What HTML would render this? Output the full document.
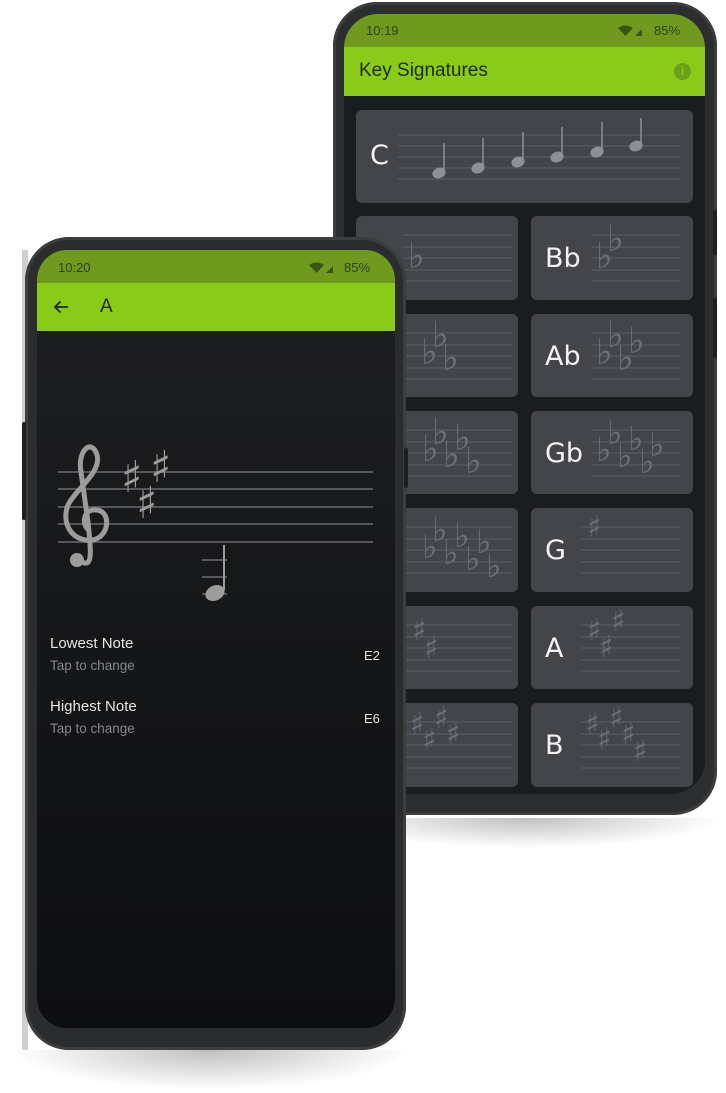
<!DOCTYPE html>
<html><head><meta charset="utf-8"><style>
*{margin:0;padding:0;box-sizing:border-box}
body{width:726px;height:1093px;background:#fff;position:relative;overflow:hidden;font-family:"Liberation Sans","DejaVu Sans",sans-serif}
.abs{position:absolute}
.card{position:absolute;background:#43454b;border-radius:6px;overflow:hidden}
.card .lbl{position:absolute;left:14px;color:#f2f2f2;font-size:27px;font-family:"DejaVu Sans","Liberation Sans",sans-serif}
.card svg{position:absolute;left:0;top:0}
.acc{font-family:"DejaVu Sans",sans-serif;fill:#6c6f76}
.fl{font-size:36px}
.sh{font-size:30px}
</style></head><body>

<!-- BACK PHONE -->
<div class="abs" style="left:326px;top:818px;width:400px;height:30px;background:radial-gradient(ellipse at 50% 0,rgba(0,0,0,.25),rgba(0,0,0,0) 70%)"></div>
<div class="abs" style="left:333px;top:2px;width:384px;height:813px;border-radius:44px;background:#2b2d2f;box-shadow:inset 0 0 0 3px #3a3c3e"></div>
<div class="abs" style="left:713px;top:210px;width:4px;height:45px;background:#1d1f20;border-radius:2px"></div>
<div class="abs" style="left:713px;top:298px;width:4px;height:60px;background:#1d1f20;border-radius:2px"></div>
<div class="abs" style="left:344px;top:14px;width:361px;height:780px;border-radius:34px;overflow:hidden;background:#1b1c1e">
  <div class="abs" style="left:0;top:0;width:361px;height:33px;background:#6f9a1e;color:#2e4210;font-size:13px">
    <span class="abs" style="left:22px;top:9px">10:19</span>
    <svg class="abs" style="left:274px;top:11px" width="30" height="12"><path d="M0 3 Q7.5 -2 15 3 L7.5 11 Z" fill="#3a5414"/><path d="M17 11 L24 4 L24 11 Z" fill="#3a5414"/></svg>
    <span class="abs" style="left:310px;top:9px">85%</span>
  </div>
  <div class="abs" style="left:0;top:33px;width:361px;height:49px;background:#8acb1a">
    <span class="abs" style="left:15px;top:13px;font-size:19px;color:#1d2a0a">Key Signatures</span>
    <div class="abs" style="left:330px;top:16px;width:17px;height:17px;border-radius:50%;background:#6ba11a;color:#8acb1a;font-size:12px;text-align:center;line-height:17px;font-weight:bold">i</div>
  </div>
</div>

<!-- Cards -->
<div class="card" style="left:356px;top:110px;width:337px;height:93px">
  <span class="lbl" style="top:30px">C</span>
  <svg width="337" height="93"><g stroke="#5d6067" stroke-width="1"><line x1="42" y1="25" x2="324" y2="25"/><line x1="42" y1="36" x2="324" y2="36"/><line x1="42" y1="47" x2="324" y2="47"/><line x1="42" y1="58" x2="324" y2="58"/><line x1="42" y1="69" x2="324" y2="69"/></g>
  <g fill="#8e9096" stroke="#8e9096" stroke-width="1.5">
  <ellipse cx="83" cy="63" rx="6" ry="4.5" transform="rotate(-20 83 63)"/><line x1="88" y1="62" x2="88" y2="33"/>
  <ellipse cx="122" cy="58" rx="6" ry="4.5" transform="rotate(-20 122 58)"/><line x1="127" y1="57" x2="127" y2="28"/>
  <ellipse cx="162" cy="52" rx="6" ry="4.5" transform="rotate(-20 162 52)"/><line x1="167" y1="51" x2="167" y2="22"/>
  <ellipse cx="201" cy="47" rx="6" ry="4.5" transform="rotate(-20 201 47)"/><line x1="206" y1="46" x2="206" y2="17"/>
  <ellipse cx="241" cy="42" rx="6" ry="4.5" transform="rotate(-20 241 42)"/><line x1="246" y1="41" x2="246" y2="12"/>
  <ellipse cx="280" cy="36" rx="6" ry="4.5" transform="rotate(-20 280 36)"/><line x1="285" y1="35" x2="285" y2="8"/>
  </g></svg>
</div>

<!-- left column cards -->
<div class="card" style="left:356px;top:216px;width:162px;height:84px"><svg width="162" height="84"><g stroke="#5d6067"><line x1="47" y1="19" x2="156" y2="19"/><line x1="47" y1="31" x2="156" y2="31"/><line x1="47" y1="42" x2="156" y2="42"/><line x1="47" y1="54" x2="156" y2="54"/><line x1="47" y1="65" x2="156" y2="65"/></g><text class="acc fl" x="52" y="52">♭</text></svg></div>
<div class="card" style="left:356px;top:314px;width:162px;height:83px"><svg width="162" height="83"><g stroke="#5d6067"><line x1="47" y1="19" x2="156" y2="19"/><line x1="47" y1="31" x2="156" y2="31"/><line x1="47" y1="42" x2="156" y2="42"/><line x1="47" y1="54" x2="156" y2="54"/><line x1="47" y1="65" x2="156" y2="65"/></g><text class="acc fl"><tspan x="65" y="50">♭</tspan><tspan x="76" y="33">♭</tspan><tspan x="86" y="56">♭</tspan></text></svg></div>
<div class="card" style="left:356px;top:411px;width:162px;height:83px"><svg width="162" height="83"><g stroke="#5d6067"><line x1="47" y1="19" x2="156" y2="19"/><line x1="47" y1="31" x2="156" y2="31"/><line x1="47" y1="42" x2="156" y2="42"/><line x1="47" y1="54" x2="156" y2="54"/><line x1="47" y1="65" x2="156" y2="65"/></g><text class="acc fl"><tspan x="66" y="50">♭</tspan><tspan x="76" y="33">♭</tspan><tspan x="87" y="56">♭</tspan><tspan x="98" y="39">♭</tspan><tspan x="109" y="62">♭</tspan></text></svg></div>
<div class="card" style="left:356px;top:508px;width:162px;height:84px"><svg width="162" height="84"><g stroke="#5d6067"><line x1="47" y1="19" x2="156" y2="19"/><line x1="47" y1="31" x2="156" y2="31"/><line x1="47" y1="42" x2="156" y2="42"/><line x1="47" y1="54" x2="156" y2="54"/><line x1="47" y1="65" x2="156" y2="65"/></g><text class="acc" font-size="33"><tspan x="66" y="50">♭</tspan><tspan x="76" y="33">♭</tspan><tspan x="87" y="56">♭</tspan><tspan x="98" y="39">♭</tspan><tspan x="109" y="62">♭</tspan><tspan x="120" y="45">♭</tspan><tspan x="130" y="69">♭</tspan></text></svg></div>
<div class="card" style="left:356px;top:606px;width:162px;height:83px"><svg width="162" height="83"><g stroke="#5d6067"><line x1="47" y1="19" x2="156" y2="19"/><line x1="47" y1="31" x2="156" y2="31"/><line x1="47" y1="42" x2="156" y2="42"/><line x1="47" y1="54" x2="156" y2="54"/><line x1="47" y1="65" x2="156" y2="65"/></g><text class="acc sh"><tspan x="56" y="34">♯</tspan><tspan x="68" y="52">♯</tspan></text></svg></div>
<div class="card" style="left:356px;top:703px;width:162px;height:84px"><svg width="162" height="84"><g stroke="#5d6067"><line x1="47" y1="19" x2="156" y2="19"/><line x1="47" y1="31" x2="156" y2="31"/><line x1="47" y1="42" x2="156" y2="42"/><line x1="47" y1="54" x2="156" y2="54"/><line x1="47" y1="65" x2="156" y2="65"/></g><text class="acc sh"><tspan x="54" y="31">♯</tspan><tspan x="66" y="47">♯</tspan><tspan x="78" y="25">♯</tspan><tspan x="90" y="41">♯</tspan></text></svg></div>

<!-- right column cards -->
<div class="card" style="left:531px;top:216px;width:162px;height:84px"><span class="lbl" style="top:27px">Bb</span><svg width="162" height="84"><g stroke="#5d6067"><line x1="61" y1="19" x2="149" y2="19"/><line x1="61" y1="31" x2="149" y2="31"/><line x1="61" y1="42" x2="149" y2="42"/><line x1="61" y1="54" x2="149" y2="54"/><line x1="61" y1="65" x2="149" y2="65"/></g><text class="acc fl"><tspan x="65" y="52">♭</tspan><tspan x="76" y="35">♭</tspan></text></svg></div>
<div class="card" style="left:531px;top:314px;width:162px;height:83px"><span class="lbl" style="top:27px">Ab</span><svg width="162" height="83"><g stroke="#5d6067"><line x1="61" y1="19" x2="149" y2="19"/><line x1="61" y1="31" x2="149" y2="31"/><line x1="61" y1="42" x2="149" y2="42"/><line x1="61" y1="54" x2="149" y2="54"/><line x1="61" y1="65" x2="149" y2="65"/></g><text class="acc fl"><tspan x="65" y="50">♭</tspan><tspan x="76" y="33">♭</tspan><tspan x="86" y="56">♭</tspan><tspan x="97" y="39">♭</tspan></text></svg></div>
<div class="card" style="left:531px;top:411px;width:162px;height:83px"><span class="lbl" style="top:27px">Gb</span><svg width="162" height="83"><g stroke="#5d6067"><line x1="61" y1="19" x2="149" y2="19"/><line x1="61" y1="31" x2="149" y2="31"/><line x1="61" y1="42" x2="149" y2="42"/><line x1="61" y1="54" x2="149" y2="54"/><line x1="61" y1="65" x2="149" y2="65"/></g><text class="acc" font-size="33"><tspan x="65" y="50">♭</tspan><tspan x="76" y="33">♭</tspan><tspan x="86" y="56">♭</tspan><tspan x="97" y="39">♭</tspan><tspan x="108" y="62">♭</tspan><tspan x="118" y="45">♭</tspan></text></svg></div>
<div class="card" style="left:531px;top:508px;width:162px;height:84px"><span class="lbl" style="top:27px">G</span><svg width="162" height="84"><g stroke="#5d6067"><line x1="50" y1="19" x2="149" y2="19"/><line x1="50" y1="31" x2="149" y2="31"/><line x1="50" y1="42" x2="149" y2="42"/><line x1="50" y1="54" x2="149" y2="54"/><line x1="50" y1="65" x2="149" y2="65"/></g><text class="acc sh"><tspan x="56" y="29">♯</tspan></text></svg></div>
<div class="card" style="left:531px;top:606px;width:162px;height:83px"><span class="lbl" style="top:27px">A</span><svg width="162" height="83"><g stroke="#5d6067"><line x1="50" y1="19" x2="149" y2="19"/><line x1="50" y1="31" x2="149" y2="31"/><line x1="50" y1="42" x2="149" y2="42"/><line x1="50" y1="54" x2="149" y2="54"/><line x1="50" y1="65" x2="149" y2="65"/></g><text class="acc sh"><tspan x="56" y="34">♯</tspan><tspan x="68" y="51">♯</tspan><tspan x="80" y="25">♯</tspan></text></svg></div>
<div class="card" style="left:531px;top:703px;width:162px;height:84px"><span class="lbl" style="top:27px">B</span><svg width="162" height="84"><g stroke="#5d6067"><line x1="50" y1="19" x2="149" y2="19"/><line x1="50" y1="31" x2="149" y2="31"/><line x1="50" y1="42" x2="149" y2="42"/><line x1="50" y1="54" x2="149" y2="54"/><line x1="50" y1="65" x2="149" y2="65"/></g><text class="acc sh"><tspan x="54" y="31">♯</tspan><tspan x="66" y="46">♯</tspan><tspan x="78" y="25">♯</tspan><tspan x="90" y="41">♯</tspan><tspan x="102" y="58">♯</tspan></text></svg></div>

<!-- FRONT PHONE -->
<div class="abs" style="left:22px;top:250px;width:6px;height:800px;background:#d0d0d0"></div>
<div class="abs" style="left:10px;top:1050px;width:400px;height:40px;background:radial-gradient(ellipse at 50% 0,rgba(0,0,0,.25),rgba(0,0,0,0) 70%)"></div>
<div class="abs" style="left:25px;top:237px;width:381px;height:813px;border-radius:44px;background:#2a2c2e;box-shadow:inset 0 0 0 3px #3b3d3f"></div>
<div class="abs" style="left:22px;top:422px;width:4px;height:98px;background:#1d1f20;border-radius:2px"></div>
<div class="abs" style="left:404px;top:448px;width:4px;height:40px;background:#1d1f20;border-radius:2px"></div>
<div class="abs" style="left:37px;top:250px;width:358px;height:778px;border-radius:30px;overflow:hidden;background:linear-gradient(#1e1f21,#0d0e10)">
  <div class="abs" style="left:0;top:0;width:358px;height:33px;background:#6f9a1e;color:#2e4210;font-size:13px">
    <span class="abs" style="left:21px;top:10px">10:20</span>
    <svg class="abs" style="left:272px;top:12px" width="30" height="12"><path d="M0 3 Q7.5 -2 15 3 L7.5 11 Z" fill="#3a5414"/><path d="M17 11 L24 4 L24 11 Z" fill="#3a5414"/></svg>
    <span class="abs" style="left:307px;top:10px">85%</span>
  </div>
  <div class="abs" style="left:0;top:33px;width:358px;height:48px;background:#8acb1a">
    <svg class="abs" style="left:16px;top:17px" width="16" height="14"><path d="M15 7 H2 M7.5 1.5 L2 7 L7.5 12.5" stroke="#1d2a0a" stroke-width="1.8" fill="none"/></svg>
    <span class="abs" style="left:63px;top:13px;font-size:19px;color:#1d2a0a">A</span>
  </div>
  <svg class="abs" style="left:0;top:0" width="358" height="400">
    <g stroke="#55575b" stroke-width="2"><line x1="21" y1="222" x2="336" y2="222"/><line x1="21" y1="239" x2="336" y2="239"/><line x1="21" y1="257" x2="336" y2="257"/><line x1="21" y1="274" x2="336" y2="274"/><line x1="21" y1="292" x2="336" y2="292"/>
    <line x1="165" y1="310" x2="190" y2="310"/><line x1="165" y1="327" x2="190" y2="327"/><line x1="165" y1="344" x2="190" y2="344"/></g>
    <g stroke="#9c9c9c" fill="none" stroke-width="5" stroke-linecap="round">
      <path d="M45 312 C 56 318 54 300 51 272 L 44 222 C 40 200 55 188 60 205 C 65 222 38 240 31 255 C 24 272 34 292 55 290 C 72 288 75 262 60 260 C 46 258 44 275 52 280"/>
    </g>
    <circle cx="40" cy="310" r="7" fill="#9c9c9c"/>
    <text font-family="DejaVu Sans,sans-serif" font-size="44" fill="#9c9c9c" font-weight="bold"><tspan x="84" y="242">♯</tspan><tspan x="99" y="268">♯</tspan><tspan x="113" y="232">♯</tspan></text>
    <ellipse cx="178" cy="343" rx="10" ry="7.5" fill="#9c9c9c" transform="rotate(-25 178 343)"/>
    <line x1="187" y1="340" x2="187" y2="295" stroke="#9c9c9c" stroke-width="2"/>
  </svg>
  <div class="abs" style="left:13px;top:385px;color:#e6e6e6;font-size:15px">Lowest Note</div>
  <div class="abs" style="left:13px;top:408px;color:#85878a;font-size:13.5px">Tap to change</div>
  <div class="abs" style="left:327px;top:398px;color:#e6e6e6;font-size:13px">E2</div>
  <div class="abs" style="left:13px;top:448px;color:#e6e6e6;font-size:15px">Highest Note</div>
  <div class="abs" style="left:13px;top:471px;color:#85878a;font-size:13.5px">Tap to change</div>
  <div class="abs" style="left:327px;top:461px;color:#e6e6e6;font-size:13px">E6</div>
</div>
</body></html>
